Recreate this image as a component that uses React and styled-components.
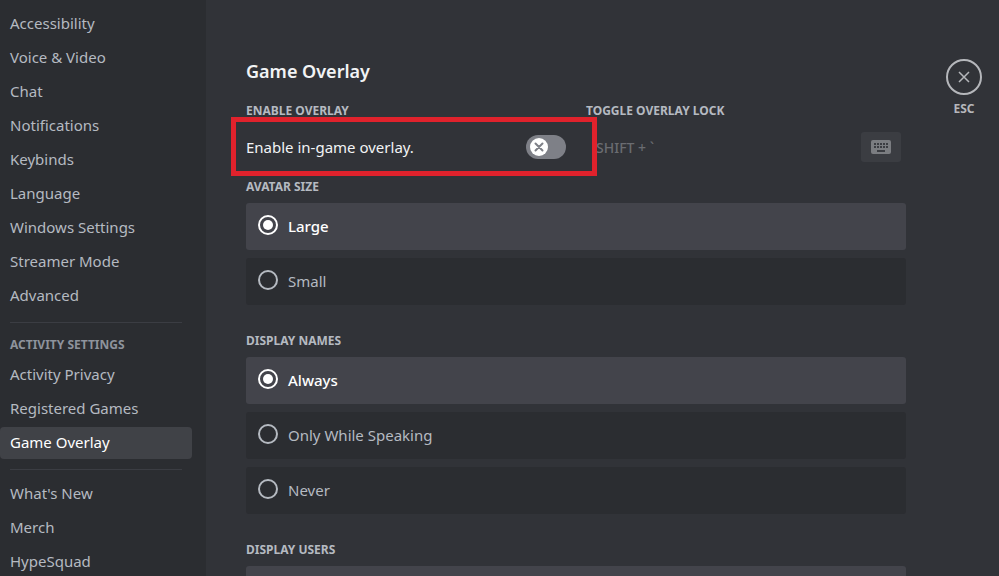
import React, { useState } from 'react';
import styled, { createGlobalStyle } from 'styled-components';

const GlobalStyle = createGlobalStyle`
  * {
    box-sizing: border-box;
  }

  body {
    margin: 0;
    background: #313338;
    font-family: 'Noto Sans', 'Open Sans', sans-serif;
    font-size: 15px;
    color: #b5bac1;
  }
`;

const Page = styled.div`
  display: flex;
  height: 100vh;
  overflow: hidden;
`;

const Sidebar = styled.nav`
  display: flex;
  flex-direction: column;
  flex: 0 0 206px;
  padding: 8px 14px 60px 0;
  background: #2b2d31;
  overflow-y: auto;
  scrollbar-width: none;
`;

const NavItem = styled.a`
  flex: 0 0 32px;
  margin-bottom: 2px;
  padding: 0 10px;
  border-radius: 4px;
  line-height: 30px;
  text-decoration: none;
  color: ${({ $active }) => ($active ? '#ffffff' : '#b5bac1')};
  background: ${({ $active }) => ($active ? '#404247' : 'transparent')};
`;

const NavHeading = styled.h3`
  margin: 0;
  padding: 0 10px;
  font-size: 12px;
  font-weight: 700;
  line-height: 28px;
  text-transform: uppercase;
  color: #8e939c;
`;

const Separator = styled.hr`
  flex: 0 0 1px;
  margin: 8px 10px;
  border: 0;
  background: #3b3d43;
`;

const Main = styled.main`
  display: flex;
  flex: 1;
  gap: 40px;
  padding: 59px 17px 60px 40px;
  overflow-y: auto;
  scrollbar-width: none;
`;

const Content = styled.div`
  flex: 1;
  max-width: 660px;
`;

const Title = styled.h2`
  margin: 0 0 20px;
  font-size: 18px;
  font-weight: 600;
  line-height: 24px;
  color: #f2f3f5;
`;

const Columns = styled.div`
  display: grid;
  grid-template-columns: 1fr 1fr;
  gap: 20px;
  margin-bottom: 12px;
`;

const Field = styled.div`
  position: relative;
`;

const Caption = styled.label`
  display: block;
  margin-bottom: 8px;
  font-size: 12px;
  font-weight: 700;
  line-height: 16px;
  text-transform: uppercase;
  color: #b5bac1;
`;

const FieldRow = styled.div`
  display: flex;
  align-items: center;
  justify-content: space-between;
  height: 40px;
`;

const FieldText = styled.span`
  color: #f2f3f5;
`;

const Highlight = styled.div`
  position: absolute;
  z-index: 1;
  top: 14px;
  right: -31px;
  bottom: -9px;
  left: -15px;
  border: 5px solid #e0222c;
  pointer-events: none;
`;

const Switch = styled.span`
  display: grid;

  > * {
    grid-area: 1 / 1;
  }
`;

const SwitchInput = styled.input`
  appearance: none;
  width: 40px;
  height: 24px;
  margin: 0;
  border-radius: 12px;
  background: ${({ checked }) => (checked ? '#23a55a' : '#7e8087')};
`;

const SwitchKnob = styled.svg`
  align-self: center;
  justify-self: ${({ $on }) => ($on ? 'end' : 'start')};
  width: 18px;
  height: 18px;
  margin: 0 4px;
  pointer-events: none;
`;

const Recorder = styled.div`
  display: flex;
  align-items: center;
  height: 40px;
  padding: 0 5px 0 10px;
`;

const RecorderInput = styled.input`
  flex: 1;
  min-width: 0;
  padding: 0;
  border: 0;
  background: none;
  font: inherit;
  font-size: 14px;
  font-weight: 500;
  color: #6a6c71;
`;

const RecorderButton = styled.button`
  display: flex;
  align-items: center;
  justify-content: center;
  width: 40px;
  height: 30px;
  padding: 0;
  border: 0;
  border-radius: 3px;
  background: #3b3d42;
  color: #7b7d81;
`;

const Group = styled.fieldset`
  display: flex;
  flex-direction: column;
  gap: 8px;
  min-width: 0;
  margin: 0 0 28px;
  padding: 0;
  border: 0;
`;

const Legend = styled.legend`
  margin-bottom: 8px;
  padding: 0;
  font-size: 12px;
  font-weight: 700;
  line-height: 16px;
  text-transform: uppercase;
  color: #b5bac1;
`;

const Option = styled.label`
  display: flex;
  align-items: flex-start;
  gap: 10px;
  padding: 12px;
  border-radius: 3px;
  font-weight: ${({ $selected }) => ($selected ? 500 : 400)};
  line-height: 23px;
  color: ${({ $selected }) => ($selected ? '#ffffff' : '#b5bac1')};
  background: ${({ $selected }) => ($selected ? '#43444b' : '#2b2d31')};
`;

const Radio = styled.input`
  appearance: none;
  display: grid;
  place-items: center;
  width: 20px;
  height: 20px;
  margin: 0;
  border: 2px solid currentColor;
  border-radius: 50%;
  color: inherit;

  &:checked::before {
    content: '';
    width: 10px;
    height: 10px;
    border-radius: 50%;
    background: currentColor;
  }
`;

const Close = styled.div`
  flex: 0 0 36px;
  text-align: center;
`;

const CloseButton = styled.button`
  display: flex;
  align-items: center;
  justify-content: center;
  width: 36px;
  height: 36px;
  margin-bottom: 6px;
  padding: 0;
  border: 2px solid #b5b7bb;
  border-radius: 50%;
  background: none;
  color: #b5b7bb;
`;

const CloseHint = styled.div`
  font-size: 12px;
  font-weight: 700;
  line-height: 16px;
  color: #b5b7bb;
`;

const userItems = [
  'Accessibility',
  'Voice & Video',
  'Chat',
  'Notifications',
  'Keybinds',
  'Language',
  'Windows Settings',
  'Streamer Mode',
  'Advanced',
];
const activityItems = ['Activity Privacy', 'Registered Games', 'Game Overlay'];
const otherItems = ["What's New", 'Merch', 'HypeSquad'];

const NavList = ({ items, active }) =>
  items.map((item) => (
    <NavItem key={item} href="#" $active={item === active}>{item}</NavItem>
  ));

const Toggle = ({ id, on, onChange }) => (
  <Switch>
    <SwitchInput
      id={id}
      type="checkbox"
      role="switch"
      checked={on}
      onChange={(e) => onChange(e.target.checked)}
    />
    <SwitchKnob viewBox="0 0 18 18" $on={on} aria-hidden="true">
      <circle cx="9" cy="9" r="9" fill="#fff"/>
      <path
        d={on ? 'M5 9.5l3 3 5.5-6' : 'M5.5 5.5l7 7M12.5 5.5l-7 7'}
        fill="none"
        stroke={on ? '#23a55a' : '#7e8087'}
        strokeWidth="2"
        strokeLinecap="round"
      />
    </SwitchKnob>
  </Switch>
);

const keys = [3, 6, 9, 12, 15];

const KeyboardIcon = () => (
  <svg width="20" height="14" viewBox="0 0 20 14" aria-hidden="true">
    <rect width="20" height="14" rx="2" fill="currentColor"/>
    {keys.map((x) => (
      <path key={x} d={`M${x} 3h2v2h-2zM${x} 6h2v2h-2z`} fill="#3b3d42"/>
    ))}
    <path d="M6 10h8v2H6z" fill="#3b3d42"/>
  </svg>
);

const RadioGroup = ({ title, name, options }) => {
  const [value, setValue] = useState(options[0]);
  return (
    <Group>
      <Legend>{title}</Legend>
      {options.map((option) => (
        <Option key={option} $selected={option === value}>
          <Radio
            type="radio"
            name={name}
            checked={option === value}
            onChange={() => setValue(option)}
          />
          {option}
        </Option>
      ))}
    </Group>
  );
};

const App = () => {
  const [enabled, setEnabled] = useState(false);
  return (
    <Page>
      <GlobalStyle/>
      <Sidebar>
        <NavList items={userItems}/>
        <Separator/>
        <NavHeading>Activity Settings</NavHeading>
        <NavList items={activityItems} active="Game Overlay"/>
        <Separator/>
        <NavList items={otherItems}/>
      </Sidebar>
      <Main>
        <Content>
          <Title>Game Overlay</Title>
          <Columns>
            <Field>
              <Caption htmlFor="overlay">Enable Overlay</Caption>
              <FieldRow>
                <FieldText>Enable in-game overlay.</FieldText>
                <Toggle id="overlay" on={enabled} onChange={setEnabled}/>
              </FieldRow>
              <Highlight/>
            </Field>
            <Field>
              <Caption htmlFor="lock">Toggle Overlay Lock</Caption>
              <Recorder>
                <RecorderInput id="lock" value="SHIFT + `" readOnly/>
                <RecorderButton type="button" aria-label="Record keybind">
                  <KeyboardIcon/>
                </RecorderButton>
              </Recorder>
            </Field>
          </Columns>
          <RadioGroup title="Avatar Size" name="avatar" options={['Large', 'Small']}/>
          <RadioGroup
            title="Display Names"
            name="names"
            options={['Always', 'Only While Speaking', 'Never']}
          />
          <RadioGroup
            title="Display Users"
            name="users"
            options={['Always', 'Only While Speaking']}
          />
        </Content>
        <Close>
          <CloseButton type="button" aria-label="Close">
            <svg width="12" height="12" viewBox="0 0 12 12" aria-hidden="true">
              <path d="M1 1l10 10M11 1L1 11" stroke="currentColor" strokeWidth="1.5"/>
            </svg>
          </CloseButton>
          <CloseHint>ESC</CloseHint>
        </Close>
      </Main>
    </Page>
  );
};

export default App;
